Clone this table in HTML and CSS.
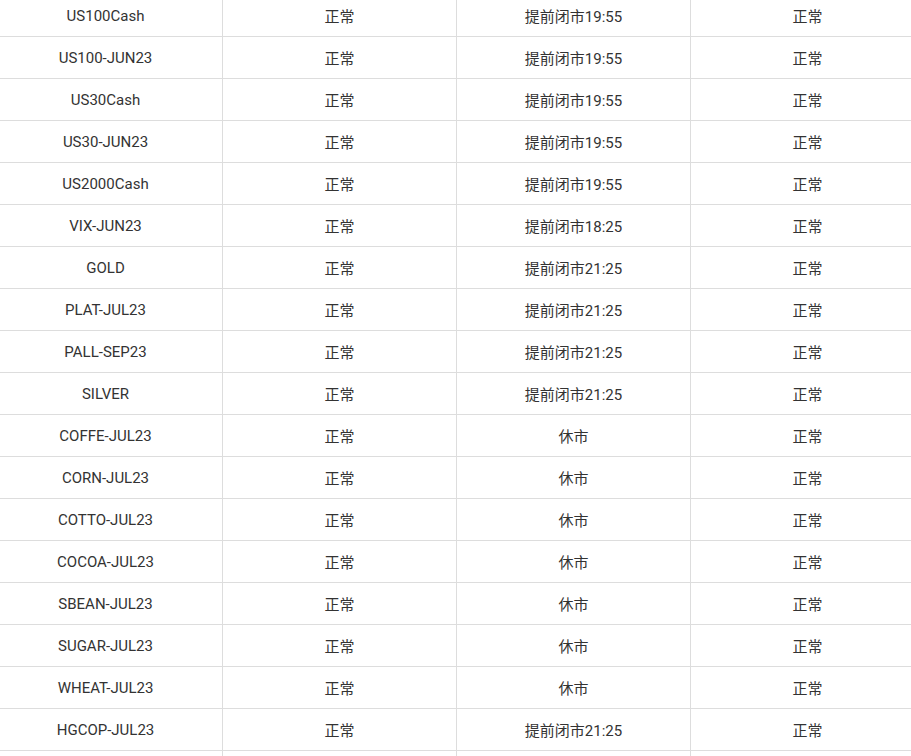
FILE: index.html
```html
<!DOCTYPE html>
<html lang="zh-CN">
<head>
<meta charset="utf-8">
<title>交易时间</title>
<link rel="stylesheet" href="styles.css">
</head>
<body>
<div class="wrap">
<table class="hours">
<tbody>
<tr><td>US100Cash</td><td>正常</td><td>提前闭市19:55</td><td>正常</td></tr>
<tr><td>US100-JUN23</td><td>正常</td><td>提前闭市19:55</td><td>正常</td></tr>
<tr><td>US30Cash</td><td>正常</td><td>提前闭市19:55</td><td>正常</td></tr>
<tr><td>US30-JUN23</td><td>正常</td><td>提前闭市19:55</td><td>正常</td></tr>
<tr><td>US2000Cash</td><td>正常</td><td>提前闭市19:55</td><td>正常</td></tr>
<tr><td>VIX-JUN23</td><td>正常</td><td>提前闭市18:25</td><td>正常</td></tr>
<tr><td>GOLD</td><td>正常</td><td>提前闭市21:25</td><td>正常</td></tr>
<tr><td>PLAT-JUL23</td><td>正常</td><td>提前闭市21:25</td><td>正常</td></tr>
<tr><td>PALL-SEP23</td><td>正常</td><td>提前闭市21:25</td><td>正常</td></tr>
<tr><td>SILVER</td><td>正常</td><td>提前闭市21:25</td><td>正常</td></tr>
<tr><td>COFFE-JUL23</td><td>正常</td><td>休市</td><td>正常</td></tr>
<tr><td>CORN-JUL23</td><td>正常</td><td>休市</td><td>正常</td></tr>
<tr><td>COTTO-JUL23</td><td>正常</td><td>休市</td><td>正常</td></tr>
<tr><td>COCOA-JUL23</td><td>正常</td><td>休市</td><td>正常</td></tr>
<tr><td>SBEAN-JUL23</td><td>正常</td><td>休市</td><td>正常</td></tr>
<tr><td>SUGAR-JUL23</td><td>正常</td><td>休市</td><td>正常</td></tr>
<tr><td>WHEAT-JUL23</td><td>正常</td><td>休市</td><td>正常</td></tr>
<tr><td>HGCOP-JUL23</td><td>正常</td><td>提前闭市21:25</td><td>正常</td></tr>
<tr><td></td><td></td><td></td><td></td></tr>
</tbody>
</table>
</div>
</body>
</html>
```
FILE: styles.css
```css
html, body {
  margin: 0;
  padding: 0;
  background: #fff;
  overflow: hidden;
}
.wrap {
  margin: -6px 0 0 -12px;
}
.hours {
  border-collapse: collapse;
  table-layout: fixed;
  width: 936px;
  font-family: Roboto, "Noto Sans CJK SC", sans-serif;
  font-size: 15px;
  color: #333;
}
.hours td {
  width: 234px;
  height: 42px;
  padding: 0;
  box-sizing: border-box;
  border: 1px solid #ddd;
  text-align: center;
  vertical-align: middle;
}
```
